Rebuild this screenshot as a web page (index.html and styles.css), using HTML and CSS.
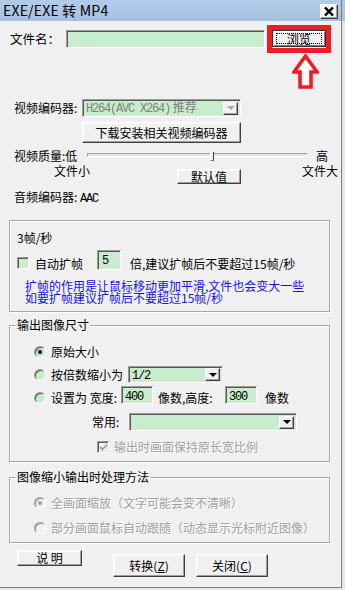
FILE: index.html
```html
<!DOCTYPE html>
<html lang="zh-CN">
<head>
<meta charset="utf-8">
<title>EXE/EXE 转 MP4</title>
<link rel="stylesheet" href="styles.css">
</head>
<body>
<div class="frame">
  <div class="window">
    <div class="titlebar">
      <span class="title">EXE/EXE 转 MP4</span>
      <span class="close"><svg width="10" height="9" viewBox="0 0 10 9"><path d="M1 0.5 L9 8.5 M9 0.5 L1 8.5" stroke="#000" stroke-width="2.4"/></svg></span>
    </div>

    <div class="row file-row">
      <span class="lbl file-lbl">文件名：</span>
      <div class="field sunken file-input"></div>
      <div class="highlight"><div class="btn default-btn">浏览</div></div>
    </div>
    <svg class="arrow" width="27" height="35" viewBox="0 0 27 35"><path d="M13.5 2 L25 18 L19 18 L19 33 L8 33 L8 18 L2 18 Z" fill="#fff" stroke="#ee1c25" stroke-width="3.6" stroke-linejoin="miter"/></svg>

    <div class="row enc-row">
      <span class="lbl enc-lbl">视频编码器:</span>
      <div class="field sunken select enc-select">
        <span class="sel-text gray"><span class="mono">H264(AVC X264)</span> 推荐</span>
        <span class="drop"><span class="tri gray-tri"></span></span>
      </div>
    </div>

    <div class="btn dl-btn">下载安装相关视频编码器</div>

    <div class="row q-row">
      <span class="lbl q-lbl">视频质量:低</span>
      <div class="slider"><span class="thumb"></span></div>
      <span class="hi">高</span>
    </div>
    <div class="row size-row">
      <span class="small-lbl">文件小</span>
      <div class="btn def-btn">默认值</div>
      <span class="big-lbl">文件大</span>
    </div>

    <div class="audio-row">音频编码器: <span class="mono">AAC</span></div>

    <div class="group g1">
      <div class="fps">3帧/秒</div>
      <div class="row ext-row">
        <span class="check sunken"></span>
        <span class="ext-lbl">自动扩帧</span>
        <div class="field sunken ext-input"><span class="mono">5</span></div>
        <span class="ext-tip">倍,建议扩帧后不要超过15帧/秒</span>
      </div>
      <div class="blue">扩帧的作用是让鼠标移动更加平滑,文件也会变大一些<br>如要扩帧建议扩帧后不要超过15帧/秒</div>
    </div>

    <div class="group g2">
      <span class="legend">输出图像尺寸</span>
      <div class="row opt r1">
        <span class="radio on"></span><span class="opt-lbl">原始大小</span>
      </div>
      <div class="row opt r2">
        <span class="radio"></span><span class="opt-lbl">按倍数缩小为</span>
        <div class="field sunken select half-select">
          <span class="sel-text"><span class="mono">1/2</span></span>
          <span class="drop"><span class="tri"></span></span>
        </div>
      </div>
      <div class="row opt r3">
        <span class="radio"></span><span class="opt-lbl">设置为 宽度:</span>
        <div class="field sunken num w-input"><span class="mono">400</span></div>
        <span class="mid-lbl">像数,高度:</span>
        <div class="field sunken num h-input"><span class="mono">300</span></div>
        <span class="end-lbl">像数</span>
      </div>
      <div class="row opt r4">
        <span class="common-lbl">常用:</span>
        <div class="field sunken select common-select">
          <span class="sel-text"></span>
          <span class="drop"><span class="tri"></span></span>
        </div>
      </div>
      <div class="row opt r5">
        <span class="check sunken disabled-check"><svg width="9" height="9" viewBox="0 0 9 9"><path d="M1 4 L3.5 6.5 L8 1.5" fill="none" stroke="#a0a0a0" stroke-width="1.8"/></svg></span>
        <span class="disabled-text ratio-lbl">输出时画面保持原长宽比例</span>
      </div>
    </div>

    <div class="group g3">
      <span class="legend">图像缩小输出时处理方法</span>
      <div class="row opt m1">
        <span class="radio off on"></span><span class="opt-lbl disabled-text">全画面缩放（文字可能会变不清晰）</span>
      </div>
      <div class="row opt m2">
        <span class="radio off"></span><span class="opt-lbl disabled-text">部分画面鼠标自动跟随（动态显示光标附近图像）</span>
      </div>
    </div>

    <div class="row btn-row">
      <div class="btn help-btn">说 明</div>
      <div class="btn act-btn convert-btn">转换(<u>Z</u>)</div>
      <div class="btn act-btn close-btn">关闭(<u>C</u>)</div>
    </div>
  </div>
</div>
</body>
</html>
```

FILE: styles.css
```css
* { box-sizing: border-box; }
html, body { margin: 0; padding: 0; }
body {
  width: 345px;
  height: 590px;
  overflow: hidden;
  font-family: "Noto Sans CJK SC", "Liberation Sans", sans-serif;
  font-size: 12px;
  line-height: 12px;
  color: #000;
  background: #e6e6e6;
}
.frame {
  width: 345px;
  height: 590px;
  background: linear-gradient(#abc6e3 0, #abc6e3 21px, #e6e6e6 21px);
}
.window {
  position: relative;
  width: 342px;
  height: 588px;
  background: #f0f0f0;
  border-right: 1px solid #7d7d7d;
  border-bottom: 1px solid #7d7d7d;
}
.mono {
  font-family: "Liberation Mono", monospace;
  font-size: 12px;
  letter-spacing: -1.2px;
}

/* title bar */
.titlebar {
  height: 21px;
  background: linear-gradient(#b2cbe8, #a5c1e0);
  display: flex;
  align-items: center;
  justify-content: space-between;
  padding: 0 3px;
}
.title { font-size: 14px; line-height: 21px; color: #000; letter-spacing: 0.2px; }
.close {
  width: 18px;
  height: 15px;
  margin-top: 1px;
  background: #f4f4f4;
  border: 1px solid;
  border-color: #fff #404040 #404040 #fff;
  box-shadow: inset -1px -1px #a0a0a0;
  display: flex;
  align-items: center;
  justify-content: center;
}

/* common controls */
.row { display: flex; }
.sunken {
  border: 1px solid;
  border-color: #9a9a9a #fff #fff #9a9a9a;
  box-shadow: inset 1px 1px #5a5a5a, inset -1px -1px #e2e2e2;
}
.field { background: #c7edcc; }
.btn {
  background: #f0f0f0;
  border: 1px solid;
  border-color: #fff #404040 #404040 #fff;
  box-shadow: inset -1px -1px #a0a0a0, inset 1px 1px #f8f8f8;
  display: flex;
  align-items: center;
  justify-content: center;
  line-height: 12px;
}
.select { display: flex; align-items: center; padding: 0 2px 0 3px; }
.sel-text { flex: 1; white-space: nowrap; }
.gray { color: #808080; }
.drop {
  width: 15px;
  height: 13px;
  background: #f0f0f0;
  border: 1px solid;
  border-color: #fff #404040 #404040 #fff;
  box-shadow: inset -1px -1px #a0a0a0;
  display: flex;
  align-items: center;
  justify-content: center;
}
.tri {
  width: 0;
  height: 0;
  border-left: 4px solid transparent;
  border-right: 4px solid transparent;
  border-top: 4px solid #000;
}
.gray-tri { border-top-color: #a8a8a8; }

/* file row */
.file-row {
  margin-top: 4px;
  height: 28px;
  align-items: center;
  padding-left: 10px;
}
.file-lbl { width: 56px; font-size: 12.5px; }
.file-input { width: 199px; height: 18px; margin-right: 2px; }
.highlight {
  width: 64px;
  height: 28px;
  border: 5px solid #ee1c25;
}
.default-btn {
  position: relative;
  width: 54px;
  height: 17px;
  border-color: #303030;
  box-shadow: inset 1px 1px #fff, inset -1px -1px #808080;
}
.default-btn::after {
  content: "";
  position: absolute;
  left: 3px; top: 2px; right: 3px; bottom: 2px;
  border: 1px dotted #000;
}
.arrow { position: absolute; left: 292px; top: 54px; }

/* encoder */
.enc-row { margin-top: 46px; height: 18px; align-items: center; padding-left: 14px; }
.enc-lbl { width: 68px; }
.enc-select { width: 159px; height: 18px; }
.dl-btn { margin: 5px 0 0 82px; width: 159px; height: 21px; }

/* quality */
.q-row { margin-top: 6px; height: 14px; padding-left: 14px; align-items: center; }
.q-lbl { width: 73px; }
.slider {
  position: relative;
  align-self: flex-start;
  margin-top: 4px;
  width: 221px;
  height: 4px;
  border: 1px solid;
  border-color: #a0a0a0 #fff #fff #a0a0a0;
  background: #e3e3e3;
}
.thumb {
  position: absolute;
  left: 122px;
  top: -2px;
  width: 4px;
  height: 9px;
  background: #f0f0f0;
  border-left: 1px solid #fff;
  border-right: 1px solid #404040;
  border-bottom: 1px solid #808080;
}
.hi { margin-left: 8px; }
.size-row { margin-top: 2px; height: 19px; align-items: flex-start; }
.small-lbl { margin-left: 54px; width: 36px; }
.def-btn { margin: 4px 0 0 87px; width: 64px; height: 15px; }
.big-lbl { margin-left: 61px; }
.audio-row { margin-top: 7px; padding-left: 14px; line-height: 12px; }

/* groups */
.group {
  position: relative;
  margin-left: 9px;
  width: 321px;
  border: 1px solid #a8a8a8;
  box-shadow: inset 1px 1px #fff, 1px 1px #fff;
}
.legend {
  position: absolute;
  left: 6px;
  top: -7px;
  padding: 0 1px;
  background: #f0f0f0;
  line-height: 12px;
}
.g1 { margin-top: 15px; height: 92px; padding-left: 7px; }
.fps { margin-top: 11px; }
.ext-row { margin-top: 6px; height: 20px; align-items: flex-end; }
.check {
  width: 12px;
  height: 12px;
  margin-bottom: 1px;
  background: #c7edcc;
  display: flex;
  align-items: center;
  justify-content: center;
}
.ext-lbl { margin-left: 6px; width: 48px; }
.ext-input { margin-left: 14px; width: 24px; height: 20px; align-self: flex-start; padding: 2px 0 0 4px; }
.ext-tip { margin-left: 9px; }
.blue { margin: 10px 0 0 8px; color: #1414e0; line-height: 12px; }

.g2 { margin-top: 13px; height: 137px; }
.opt { padding-left: 24px; align-items: center; }
.radio {
  position: relative;
  width: 12px;
  height: 12px;
  border-radius: 50%;
  background: #c7edcc;
  border: 1px solid;
  border-color: #9a9a9a #fff #fff #9a9a9a;
  box-shadow: inset 1px 1px #5a5a5a;
}
.radio.on::after {
  content: "";
  position: absolute;
  left: 3px; top: 3px;
  width: 4px; height: 4px;
  border-radius: 50%;
  background: #000;
}
.radio.off { background: #f0f0f0; box-shadow: inset 1px 1px #a0a0a0; }
.radio.off.on::after { background: #a0a0a0; }
.opt-lbl { margin-left: 5px; white-space: nowrap; }
.r1 { margin-top: 19px; height: 14px; }
.r2 { margin-top: 7px; height: 17px; }
.half-select { margin-left: 5px; width: 95px; height: 17px; }
.r3 { margin-top: 3px; height: 18px; align-items: flex-end; }
.num { height: 18px; align-self: flex-start; padding: 2px 0 0 3px; }
.w-input { margin-left: 4px; width: 32px; }
.mid-lbl { margin-left: 5px; width: 62px; }
.h-input { margin-left: 5px; width: 32px; }
.end-lbl { margin-left: 8px; }
.r4 { margin-top: 9px; height: 18px; padding-left: 82px; }
.common-lbl { width: 37px; }
.common-select { width: 168px; height: 18px; }
.r5 { margin-top: 9px; height: 14px; padding-left: 87px; }
.disabled-check { background: #f0f0f0; margin-bottom: 0; }
.disabled-text { color: #a0a0a0; text-shadow: 1px 1px 0 #fff; }
.ratio-lbl { margin-left: 5px; }

.g3 { margin-top: 15px; height: 66px; }
.m1 { margin-top: 18px; height: 14px; }
.m2 { margin-top: 11px; height: 14px; }

.btn-row { margin-top: 7px; padding-left: 17px; align-items: flex-start; }
.help-btn { width: 65px; height: 16px; }
.act-btn { margin-top: 4px; width: 72px; height: 23px; }
.convert-btn { margin-left: 31px; }
.close-btn { margin-left: 11px; }
```
